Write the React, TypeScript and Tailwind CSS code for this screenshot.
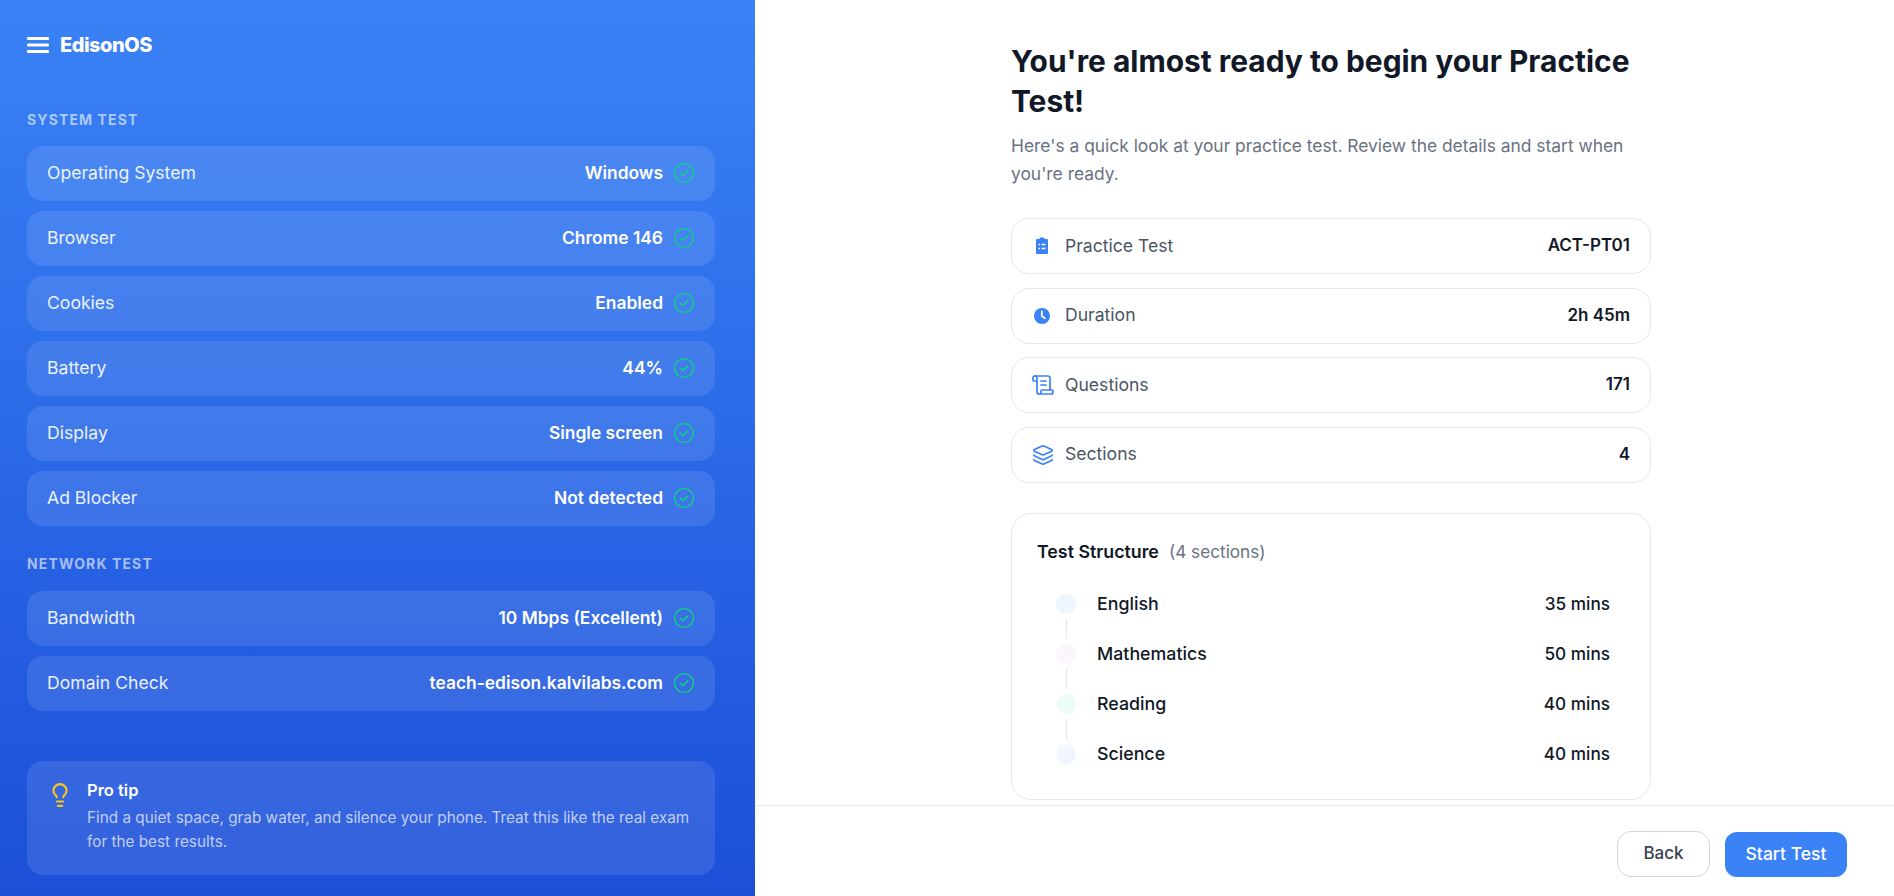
import type { FC, ReactNode } from "react";
import { Lightbulb, ScrollText, Layers } from "lucide-react";

const systemRows = [
  ["Operating System", "Windows"],
  ["Browser", "Chrome 146"],
  ["Cookies", "Enabled"],
  ["Battery", "44%"],
  ["Display", "Single screen"],
  ["Ad Blocker", "Not detected"],
];

const networkRows = [
  ["Bandwidth", "10 Mbps (Excellent)"],
  ["Domain Check", "teach-edison.kalvilabs.com"],
];

const CheckCircle: FC = () => (
  <svg width="22" height="22" viewBox="0 0 22 22" fill="none" className="shrink-0">
    <circle cx="11" cy="11" r="9.4" stroke="#0ad47f" strokeWidth="1.4" />
    <path d="M7.2 11.3l2.6 2.2 5-4.6" stroke="#0ad47f" strokeWidth="1.5" strokeLinecap="round" strokeLinejoin="round" />
  </svg>
);

const StatusRow: FC<{ label: string; value: string }> = ({ label, value }) => (
  <div className="flex h-[55px] items-center justify-between rounded-2xl bg-white/10 px-[20px] text-[17.6px]">
    <span className="text-white/90">{label}</span>
    <div className="flex items-center gap-[10px]">
      <span className="text-[17.4px] font-semibold text-white">{value}</span>
      <CheckCircle />
    </div>
  </div>
);

const SectionTitle: FC<{ children: ReactNode }> = ({ children }) => (
  <p className="text-[14px] leading-[18px] font-bold tracking-[0.08em] text-white/60">{children}</p>
);

const ClipboardIcon: FC = () => (
  <svg width="24" height="24" viewBox="0 0 24 24" fill="#3b82f6">
    <path d="M9.5 5V4.5a1 1 0 0 1 1-1h3a1 1 0 0 1 1 1V5H17a1 1 0 0 1 1 1v13a1 1 0 0 1-1 1H7a1 1 0 0 1-1-1V6a1 1 0 0 1 1-1h2.5z" />
    <path d="M8.5 10.5h1.5M11.5 10.5h4M8.5 14.5h1.5M11.5 14.5h4" stroke="#fff" strokeWidth="1.4" />
  </svg>
);

const ClockIcon: FC = () => (
  <svg width="24" height="24" viewBox="0 0 24 24" fill="#3b82f6">
    <circle cx="12" cy="12" r="8" />
    <path d="M11.8 7.5V12l3.2 2.4" stroke="#fff" strokeWidth="1.8" fill="none" strokeLinecap="round" strokeLinejoin="round" />
  </svg>
);

const infoRows: { label: string; value: string; icon: ReactNode }[] = [
  { label: "Practice Test", value: "ACT-PT01", icon: <ClipboardIcon /> },
  { label: "Duration", value: "2h 45m", icon: <ClockIcon /> },
  { label: "Questions", value: "171", icon: <ScrollText size={24} color="#3b82f6" strokeWidth={1.7} className="ml-px" /> },
  { label: "Sections", value: "4", icon: <Layers size={22} color="#3b82f6" strokeWidth={1.8} className="ml-[2px]" /> },
];

const sections = [
  { name: "English", mins: "35 mins", dot: "bg-blue-50" },
  { name: "Mathematics", mins: "50 mins", dot: "bg-purple-50" },
  { name: "Reading", mins: "40 mins", dot: "bg-emerald-50" },
  { name: "Science", mins: "40 mins", dot: "bg-blue-50" },
];

const Sidebar: FC = () => (
  <aside className="flex h-full w-[755px] shrink-0 flex-col bg-gradient-to-b from-[#3b82f6] to-[#1d4ed8] pr-[40px] pb-[21px] pl-[27px]">
    <div className="flex h-[90px] items-center gap-[11px]">
      <svg width="22" height="16" viewBox="0 0 22 16" fill="#fff">
        <rect width="22" height="3" rx="1" />
        <rect y="6.5" width="22" height="3" rx="1" />
        <rect y="13" width="22" height="3" rx="1" />
      </svg>
      <span className="text-[20px] font-extrabold tracking-tight text-white">EdisonOS</span>
    </div>
    <div className="mt-[21px]">
      <SectionTitle>SYSTEM TEST</SectionTitle>
    </div>
    <div className="mt-[17px] flex flex-col gap-[10px]">
      {systemRows.map(([label, value]) => (
        <StatusRow key={label} label={label} value={value} />
      ))}
    </div>
    <div className="mt-[29px]">
      <SectionTitle>NETWORK TEST</SectionTitle>
    </div>
    <div className="mt-[18px] flex flex-col gap-[10px]">
      {networkRows.map(([label, value]) => (
        <StatusRow key={label} label={label} value={value} />
      ))}
    </div>
    <div className="mt-auto flex h-[114px] gap-[14px] rounded-2xl bg-white/10 px-[20px] pt-[19px]">
      <Lightbulb size={26} color="#fcc419" strokeWidth={2} className="mt-[2px] shrink-0" />
      <div>
        <p className="text-[16.5px] leading-[20px] font-semibold text-white">Pro tip</p>
        <p className="mt-[6px] text-[15.3px] leading-[24px] text-white/70">
          Find a quiet space, grab water, and silence your phone. Treat this like the real exam for the best results.
        </p>
      </div>
    </div>
  </aside>
);

const Main: FC = () => (
  <main className="flex h-full min-w-0 flex-1 flex-col bg-white">
    <div className="flex-1 overflow-hidden pt-[41px] pl-[256px]">
      <div className="w-[640px]">
        <h1 className="text-[29.9px] leading-[40px] font-bold text-[#111827]">
          You're almost ready to begin your Practice Test!
        </h1>
        <p className="mt-[11px] text-[17.4px] leading-[28px] text-gray-500">
          Here's a quick look at your practice test. Review the details and start when you're ready.
        </p>
        <div className="mt-[30px] flex flex-col gap-[13.5px]">
          {infoRows.map((row) => (
            <div key={row.label} className="flex h-[56px] items-center rounded-[18px] border border-gray-200 pr-[20px] pl-[18px]">
              <span className="flex w-[35px] shrink-0">{row.icon}</span>
              <span className="text-[17.6px] text-gray-600">{row.label}</span>
              <span className="ml-auto text-[17px] font-semibold text-[#111827]">{row.value}</span>
            </div>
          ))}
        </div>
        <div className="mt-[30px] h-[287px] rounded-[20px] border border-gray-200 px-[25px] pt-[25px]">
          <div className="flex items-center gap-[10px]">
            <span className="text-[17.8px] font-semibold text-[#111827]">Test Structure</span>
            <span className="text-[17.2px] text-gray-500">(4 sections)</span>
          </div>
          <div className="mt-[29px] flex flex-col pr-[15px] pl-[19px]">
            {sections.map((s, i) => (
              <div key={s.name} className="flex h-[50px] items-start">
                <div className="flex w-[20px] shrink-0 flex-col items-center">
                  <span className={`size-[20px] rounded-full ${s.dot}`} />
                  {i < sections.length - 1 && <span className="mt-[5px] h-[20px] w-px bg-gray-200" />}
                </div>
                <span className="ml-[21px] text-[17.8px] leading-[20px] font-medium text-[#111827]">{s.name}</span>
                <span className="ml-auto text-[17.2px] leading-[20px] font-medium text-[#111827]">{s.mins}</span>
              </div>
            ))}
          </div>
        </div>
      </div>
    </div>
    <footer className="flex h-[91px] shrink-0 items-center justify-end gap-[15px] border-t border-gray-200 pt-[6px] pr-[47px]">
      <button className="h-[46px] w-[93px] rounded-[14px] border border-gray-300 text-[17px] font-medium text-gray-700">Back</button>
      <button className="h-[45px] w-[122px] rounded-xl bg-[#3b82f6] text-[17.6px] font-medium text-white">Start Test</button>
    </footer>
  </main>
);

export default function App() {
  return (
    <div className="flex h-[896px] w-[1894px] overflow-hidden font-['Inter','Noto_Sans',sans-serif]">
      <Sidebar />
      <Main />
    </div>
  );
}
